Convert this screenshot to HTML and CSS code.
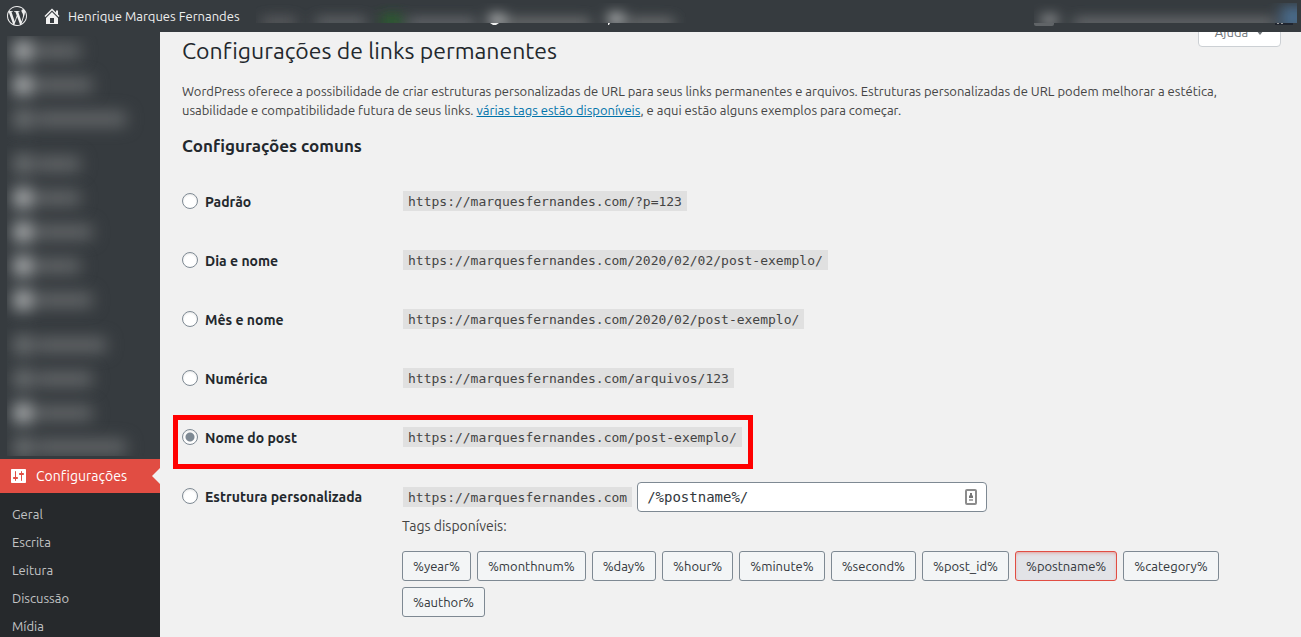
FILE: index.html
```html
<!DOCTYPE html>
<html lang="pt-BR">
<head>
    <meta charset="UTF-8">
    <meta name="viewport" content="width=device-width, initial-scale=1.0">
    <title>Configurações de links permanentes</title>
    <link rel="stylesheet" href="styles.css">
</head>
<body>
    <header class="adminbar">
        <a class="wp-logo" href="#" aria-label="WordPress">
            <svg width="20" height="20" viewBox="0 0 24 24" fill="#eee"><path d="M21.469 6.825c.84 1.537 1.318 3.3 1.318 5.175 0 3.979-2.156 7.456-5.363 9.325l3.295-9.527c.615-1.54.82-2.771.82-3.864 0-.405-.026-.78-.07-1.11m-7.981.105c.647-.03 1.232-.105 1.232-.105.582-.075.514-.93-.067-.899 0 0-1.755.135-2.88.135-1.064 0-2.85-.15-2.85-.15-.585-.03-.661.855-.075.885 0 0 .54.061 1.125.09l1.68 4.605-2.37 7.08L5.354 6.9c.649-.03 1.234-.1 1.234-.1.585-.075.516-.93-.065-.896 0 0-1.746.138-2.874.138-.2 0-.438-.008-.69-.015C4.911 3.15 8.235 1.215 12 1.215c2.809 0 5.365 1.072 7.286 2.833-.046-.003-.091-.009-.141-.009-1.06 0-1.812.923-1.812 1.914 0 .89.513 1.643 1.06 2.531.411.72.89 1.643.89 2.977 0 .915-.354 1.994-.821 3.479l-1.075 3.585-3.9-11.61.001.014zM12 22.784c-1.059 0-2.081-.153-3.048-.437l3.237-9.406 3.315 9.087c.024.053.05.101.078.149-1.12.393-2.325.609-3.582.609M1.211 12c0-1.564.336-3.05.935-4.39L7.29 21.709C3.694 19.96 1.212 16.271 1.211 12M12 0C5.385 0 0 5.385 0 12s5.385 12 12 12 12-5.385 12-12S18.615 0 12 0"/></svg>
        </a>
        <a class="site-name" href="#">
            <svg width="20" height="20" viewBox="0 0 20 20" fill="#f1f1f1"><path d="M16 8.5l1.53 1.53-1.06 1.06L10 4.6l-6.47 6.49-1.06-1.06L10 2.5l4 4v-2h2v4zm-6-2.46l6 5.99V18H4v-5.97zM12 17v-5H8v5h4z"/></svg>
            Henrique Marques Fernandes
        </a>
        <svg class="bar-left" width="430" height="32" viewBox="0 0 430 32">
            <defs>
                <filter id="soft" x="-50%" y="-100%" width="200%" height="300%"><feGaussianBlur stdDeviation="7 6"/></filter>
                <clipPath id="strip"><rect x="0" y="3" width="430" height="20"/></clipPath>
            </defs>
            <g clip-path="url(#strip)">
                <g filter="url(#soft)">
                    <rect x="6" y="16" width="34" height="12" fill="#56595c"/>
                    <rect x="60" y="16" width="50" height="12" fill="#5c5f62"/>
                    <rect x="126" y="14" width="20" height="14" fill="#2b5f2e"/>
                    <rect x="152" y="17" width="68" height="12" fill="#606467"/>
                    <rect x="234" y="13" width="14" height="14" fill="#b0b2b3"/>
                    <rect x="250" y="17" width="84" height="12" fill="#66696b"/>
                    <rect x="353" y="12" width="14" height="14" fill="#b0b2b3"/>
                    <rect x="372" y="17" width="46" height="12" fill="#66696b"/>
                </g>
            </g>
            <path d="M234 23h9l-3 2h-3z" fill="#eee"/>
            <path d="M352 23h2l-1 2h-1z" fill="#eee"/>
        </svg>
        <svg class="bar-right" width="267" height="32" viewBox="0 0 267 32">
            <defs>
                <clipPath id="strip-right"><rect x="0" y="3" width="263" height="20"/></clipPath>
            </defs>
            <g clip-path="url(#strip-right)">
                <g filter="url(#soft)">
                    <rect x="8" y="14" width="15" height="12" fill="#8c8e90"/>
                    <rect x="40" y="17" width="200" height="12" fill="#65686a"/>
                    <rect x="247" y="6" width="26" height="24" fill="#4a6b8a"/>
                </g>
            </g>
            <path d="M0 23h20v1q0 2-2 2H2q-2 0-2-2z" fill="#606467"/>
            <rect x="241" y="23" width="18" height="2" fill="#20252f"/>
            <path d="M243 23h2v1h-2zM247 23h2v1h-2z" fill="#999"/>
        </svg>
    </header>

    <div class="layout">
        <nav class="sidebar">
            <div class="blurred">
                <div class="ghost short"><i></i><b></b></div>
                <div class="ghost medium"><i></i><b></b></div>
                <div class="ghost wide faint"><i></i><b></b></div>
                <div class="ghost short faint split"><i></i><b></b></div>
                <div class="ghost short"><i></i><b></b></div>
                <div class="ghost medium"><i></i><b></b></div>
                <div class="ghost short"><i></i><b></b></div>
                <div class="ghost medium"><i></i><b></b></div>
                <div class="ghost large faint split"><i></i><b></b></div>
                <div class="ghost medium faint"><i></i><b></b></div>
                <div class="ghost medium"><i></i><b></b></div>
                <div class="ghost wide faint"><i></i><b></b></div>
            </div>
            <a class="current" href="#">
                <svg width="20" height="20" viewBox="0 0 20 20" fill="#fff"><path d="M18 16V4c0-.55-.45-1-1-1H4c-.55 0-1 .45-1 1v12c0 .55.45 1 1 1h13c.55 0 1-.45 1-1zM8 11h1c.55 0 1 .45 1 1s-.45 1-1 1H8v1.5c0 .28-.22.5-.5.5s-.5-.22-.5-.5V13H6c-.55 0-1-.45-1-1s.45-1 1-1h1V5.5c0-.28.22-.5.5-.5s.5.22.5.5V11zm5-2h-1c-.55 0-1-.45-1-1s.45-1 1-1h1V5.5c0-.28.22-.5.5-.5s.5.22.5.5V7h1c.55 0 1 .45 1 1s-.45 1-1 1h-1v5.5c0 .28-.22.5-.5.5s-.5-.22-.5-.5V9z"/></svg>
                Configurações
            </a>
            <ul class="submenu">
                <li><a href="#">Geral</a></li>
                <li><a href="#">Escrita</a></li>
                <li><a href="#">Leitura</a></li>
                <li><a href="#">Discussão</a></li>
                <li><a href="#">Mídia</a></li>
            </ul>
        </nav>

        <main class="content">
            <button type="button" class="help-tab">Ajuda <svg width="8" height="5" viewBox="0 0 8 5" fill="#72777c"><path d="M0 0h8L4 5z"/></svg></button>

            <h1>Configurações de links permanentes</h1>
            <p class="intro">WordPress oferece a possibilidade de criar estruturas personalizadas de URL para seus links permanentes e arquivos. Estruturas personalizadas de URL podem melhorar a estética, usabilidade e compatibilidade futura de seus links. <a href="#">várias tags estão disponíveis</a>, e aqui estão alguns exemplos para começar.</p>
            <h2>Configurações comuns</h2>

            <form>
                <table class="form-table">
                    <tr>
                        <th><label><input type="radio" name="selection"> Padrão</label></th>
                        <td><code>https://marquesfernandes.com/?p=123</code></td>
                    </tr>
                    <tr>
                        <th><label><input type="radio" name="selection"> Dia e nome</label></th>
                        <td><code>https://marquesfernandes.com/2020/02/02/post-exemplo/</code></td>
                    </tr>
                    <tr>
                        <th><label><input type="radio" name="selection"> Mês e nome</label></th>
                        <td><code>https://marquesfernandes.com/2020/02/post-exemplo/</code></td>
                    </tr>
                    <tr>
                        <th><label><input type="radio" name="selection"> Numérica</label></th>
                        <td><code>https://marquesfernandes.com/arquivos/123</code></td>
                    </tr>
                    <tr class="highlight">
                        <th><label><input type="radio" name="selection" checked> Nome do post</label></th>
                        <td><code>https://marquesfernandes.com/post-exemplo/</code></td>
                    </tr>
                    <tr>
                        <th><label><input type="radio" name="selection"> Estrutura personalizada</label></th>
                        <td>
                            <div class="structure">
                                <code>https://marquesfernandes.com</code>
                                <div class="field">
                                    <input type="text" value="/%postname%/" aria-label="Estrutura personalizada">
                                    <svg width="12" height="16" viewBox="0 0 12 16"><rect x="1" y="1" width="10" height="14" rx="1" fill="#fff" stroke="#8c8c8c" stroke-width="2"/><path d="M5 4h2v2l1 1v2H4V7l1-1z" fill="#777"/><path d="M4 10h4v2H4z" fill="#aaa"/></svg>
                                </div>
                            </div>
                            <p class="tags-label">Tags disponíveis:</p>
                            <div class="tags">
                                <button type="button">%year%</button>
                                <button type="button">%monthnum%</button>
                                <button type="button">%day%</button>
                                <button type="button">%hour%</button>
                                <button type="button">%minute%</button>
                                <button type="button">%second%</button>
                                <button type="button">%post_id%</button>
                                <button type="button" class="active">%postname%</button>
                                <button type="button">%category%</button>
                                <button type="button">%author%</button>
                            </div>
                        </td>
                    </tr>
                </table>
            </form>
        </main>
    </div>
</body>
</html>
```

FILE: styles.css
```css
*,
*::before,
*::after {
    box-sizing: border-box;
}

body {
    font-family: Ubuntu, Roboto, sans-serif;
    font-size: 13px;
    line-height: 19px;
    text-rendering: optimizeSpeed;
    color: #444;
    background-color: #f1f1f1;
    margin: 0;
    height: 100vh;
    overflow: hidden;
    display: flex;
    flex-direction: column;
}

/* top bar */
.adminbar {
    display: flex;
    align-items: center;
    height: 32px;
    flex: none;
    padding-left: 7px;
    background-color: #363b3f;
}

.adminbar a {
    display: flex;
    align-items: center;
    color: #eee;
    text-decoration: none;
}

.site-name {
    gap: 6px;
    width: 214px;
    margin-left: 15px;
    white-space: nowrap;
}

.bar-right {
    margin-left: auto;
}

.layout {
    display: flex;
    flex: 1;
    min-height: 0;
}

/* side menu */
.sidebar {
    width: 160px;
    flex: none;
    background-color: #363b3f;
    padding-top: 4px;
    overflow: hidden;
}

.blurred {
    height: 420px;
    margin: 0 0 3px 7px;
    overflow: hidden;
}

.ghost {
    display: flex;
    align-items: center;
    gap: 4px;
    height: 34px;
    padding-left: 7px;
    filter: blur(8px);
}

.ghost:first-child {
    margin-top: -2px;
}

.ghost.split {
    margin-top: 11px;
}

.ghost i {
    width: 18px;
    height: 20px;
    background-color: #b0b3b4;
}

.ghost.faint i {
    background-color: #6c7072;
}

.ghost b {
    width: 44px;
    height: 14px;
    background-color: #66696b;
}

.ghost.medium b {
    width: 56px;
}

.ghost.large b {
    width: 70px;
}

.ghost.wide b {
    width: 90px;
}

.current {
    display: flex;
    align-items: center;
    gap: 8px;
    position: relative;
    height: 34px;
    padding-left: 8px;
    font-size: 14px;
    color: #fff;
    background-color: #e14d43;
    text-decoration: none;
}

.current::after {
    content: "";
    position: absolute;
    right: 0;
    top: 9px;
    border: 8px solid transparent;
    border-right-color: #f1f1f1;
    border-left: none;
}

.submenu {
    list-style: none;
    margin: 0;
    padding: 7px 12px 40px;
    background-color: #26292c;
}

.submenu a {
    display: block;
    line-height: 28px;
    color: #c3c4c5;
    text-decoration: none;
}

/* page */
.content {
    flex: 1;
    position: relative;
    overflow: hidden;
    padding: 4px 20px 0 22px;
}

.help-tab {
    position: absolute;
    top: -15px;
    right: 20px;
    width: 83px;
    height: 30px;
    padding: 0;
    font: inherit;
    color: #72777c;
    background-color: #fff;
    border: 1px solid #ccd0d4;
    border-radius: 0 0 4px 4px;
}

.help-tab svg {
    margin: 0 0 2px 5px;
}

h1 {
    margin: 0;
    font-size: 23px;
    font-weight: 400;
    line-height: 30px;
    color: #23282d;
}

.intro {
    margin: 16px 0 14px;
}

.intro a {
    color: #0073aa;
}

h2 {
    margin: 0 0 14px;
    font-size: 17px;
    line-height: 24px;
    color: #23282d;
}

.form-table {
    width: 100%;
    border-collapse: collapse;
    font-size: 14px;
    line-height: 29px;
}

.form-table th,
.form-table td {
    padding: 15px 0;
    vertical-align: top;
    text-align: left;
}

.form-table th {
    width: 220px;
    padding: 16px 0 14px;
    color: #23282d;
}

.form-table label {
    display: flex;
    align-items: center;
    gap: 7px;
}

input[type="radio"] {
    appearance: none;
    width: 16px;
    height: 16px;
    margin: 0 0 4px;
    background-color: #fff;
    border: 1px solid #7e8993;
    border-radius: 50%;
    box-shadow: inset 0 1px 2px rgba(0, 0, 0, 0.1);
}

input[type="radio"]:checked {
    background-image: radial-gradient(circle, #7e8993 4px, transparent 5px);
}

code {
    margin: 0 1px;
    padding: 3px 5px 2px;
    font-family: "DejaVu Sans Mono", monospace;
    font-size: 13px;
    background-color: #e0e0e0;
}

.highlight {
    position: relative;
}

/* red frame round the chosen option */
.highlight::after {
    content: "";
    position: absolute;
    left: -9px;
    top: 7px;
    width: 580px;
    height: 54px;
    border: 5px solid #f00;
}

.structure {
    display: flex;
    align-items: center;
    gap: 4px;
}

.structure code {
    line-height: 15px;
}

.field {
    position: relative;
    width: 350px;
}

.field input {
    display: block;
    width: 100%;
    height: 30px;
    padding: 0 9px;
    font-family: "DejaVu Sans Mono", monospace;
    font-size: 14px;
    color: #32373c;
    background-color: #fff;
    border: 1px solid #7e8993;
    border-radius: 4px;
}

.field svg {
    position: absolute;
    right: 10px;
    top: 7px;
}

.tags-label {
    margin: 4px 0 15px;
    line-height: 20px;
}

.tags {
    display: flex;
    flex-wrap: wrap;
    gap: 6px;
}

.tags button {
    height: 30px;
    padding: 0 10px;
    font-family: inherit;
    font-size: 13px;
    color: #32373c;
    background-color: #f3f5f6;
    border: 1px solid #7e8993;
    border-radius: 3px;
}

.tags button.active {
    background-color: #e2e3e7;
    border-color: #e14d43;
    box-shadow: inset 0 2px 5px -3px #e14d43;
}
```
